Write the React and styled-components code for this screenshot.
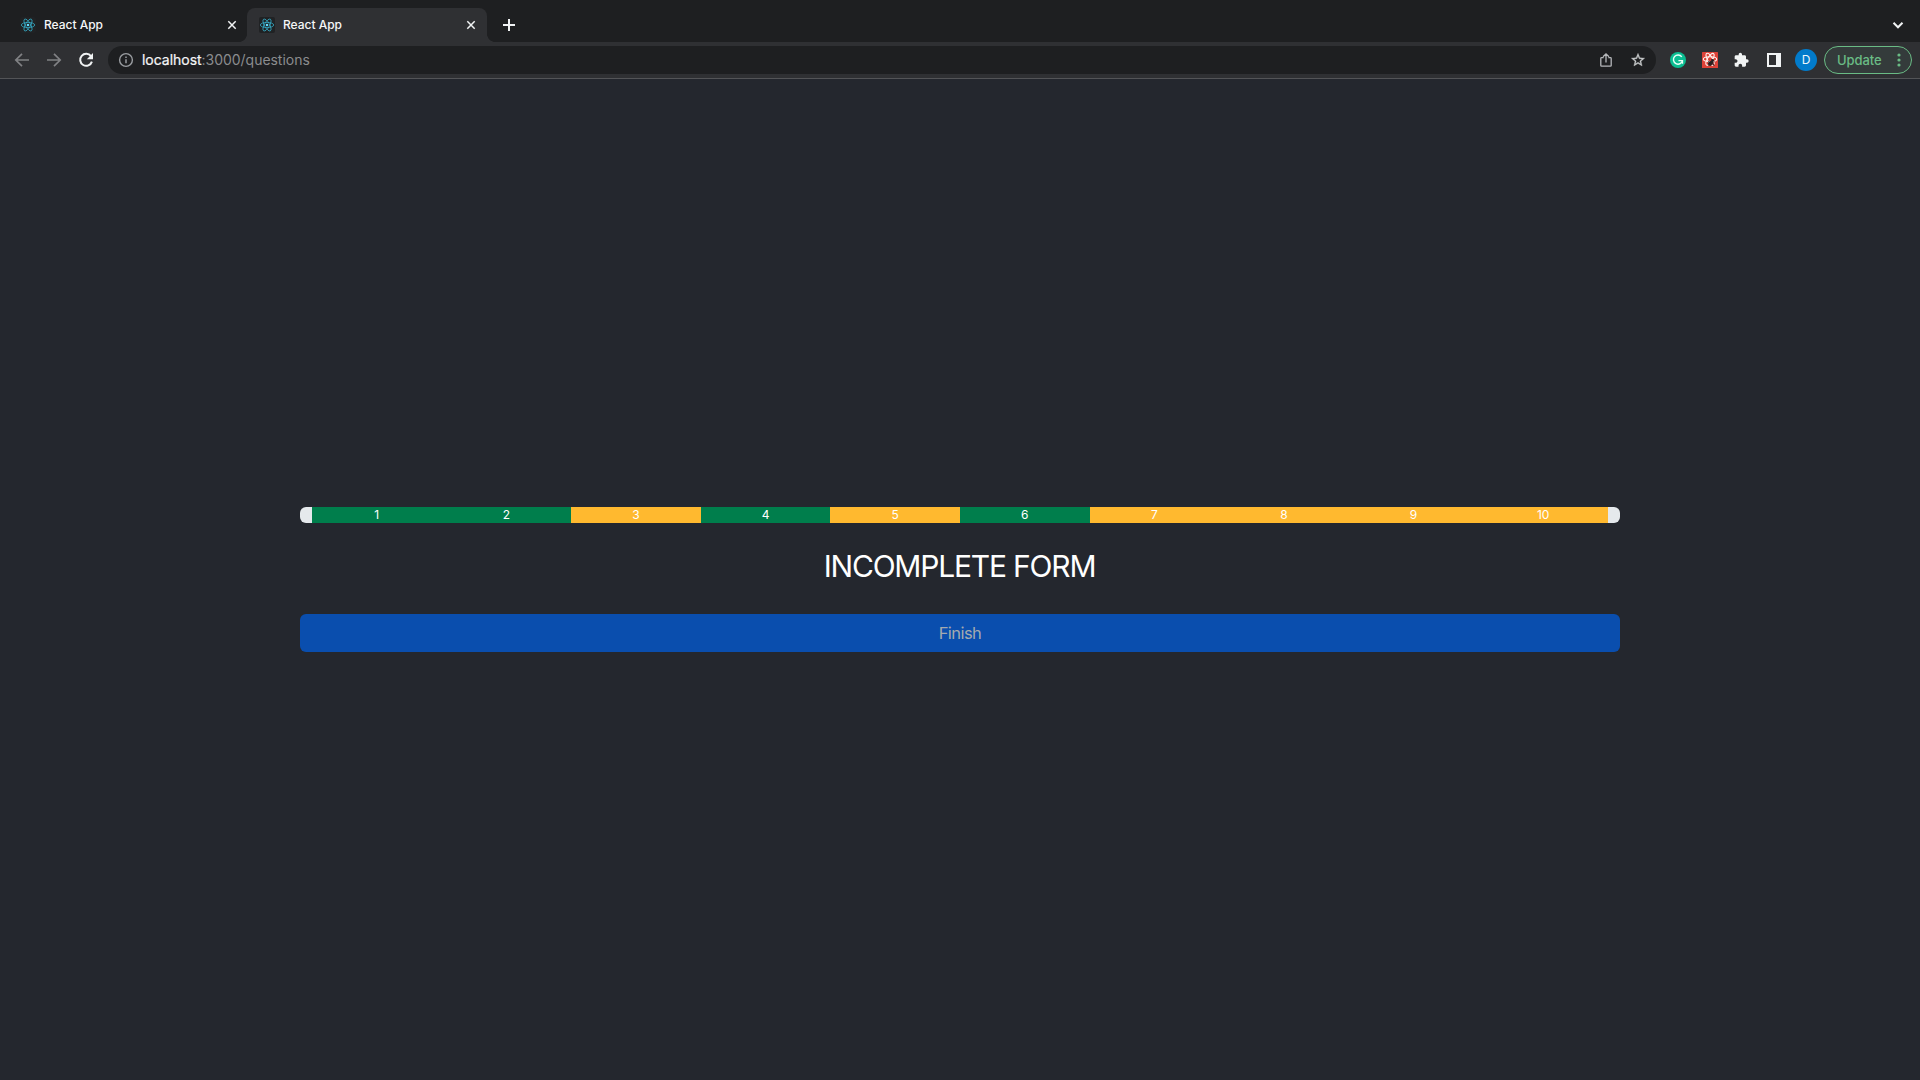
import React from "react";
import styled, { createGlobalStyle } from "styled-components";

const Global = createGlobalStyle`
  *, *::before, *::after { box-sizing: border-box; }
  html, body { margin: 0; padding: 0; background: #24272e; }
  body, button { font-family: Inter, "Liberation Sans", sans-serif; }
  body { overflow: hidden; }
  svg { display: block; flex: none; }
`;

const Browser = styled.div`
  width: 100%;
  height: 100vh;
  display: flex;
  flex-direction: column;
`;

const TabStrip = styled.div`
  flex: none;
  height: 42px;
  display: flex;
  align-items: flex-end;
  background: #1e1f21;
  padding: 0 14px 0 8px;
`;

const Tab = styled.div`
  position: relative;
  width: ${(p) => (p.$active ? 240 : 239)}px;
  height: 34px;
  display: flex;
  align-items: center;
  gap: 8px;
  padding: 0 ${(p) => (p.$active ? 9 : 8)}px 0 12px;
  border-radius: 8px 8px 0 0;
  background: ${(p) => (p.$active ? "#2f3033" : "transparent")};
  color: #f6f7f8;

  &::before,
  &::after {
    content: "";
    display: ${(p) => (p.$active ? "block" : "none")};
    position: absolute;
    bottom: 0;
    width: 8px;
    height: 8px;
  }
  &::before {
    left: -8px;
    background: radial-gradient(circle at 0 0, transparent 7.6px, #2f3033 8.2px);
  }
  &::after {
    right: -8px;
    background: radial-gradient(circle at 100% 0, transparent 7.6px, #2f3033 8.2px);
  }
`;

const Favicon = styled.span`
  width: 16px;
  height: 16px;
  border-radius: 2px;
  background: #202224;
`;

const TabTitle = styled.span`
  flex: 1;
  font-size: 12px;
  line-height: 16px;
  font-weight: 500;
  letter-spacing: -0.02px;
`;

const IconButton = styled.button`
  flex: none;
  width: ${(p) => p.$w || 14}px;
  height: ${(p) => p.$h || 14}px;
  display: flex;
  align-items: center;
  justify-content: center;
  padding: 0;
  border: 0;
  background: none;
  color: ${(p) => p.$color || "#f1f3f4"};
`;

const NewTab = styled(IconButton)`
  margin: 0 auto 10px 15px;
`;

const TabSearch = styled(IconButton)`
  margin-bottom: 10px;
`;

const Toolbar = styled.div`
  flex: none;
  height: 37px;
  display: flex;
  align-items: center;
  padding: 0 8px 0 6px;
  background: #2f3033;
  border-bottom: 1px solid #535457;
`;

const Address = styled.div`
  flex: 1;
  height: 28px;
  display: flex;
  align-items: center;
  margin-left: 6px;
  padding: 0 2px 0 10px;
  border-radius: 14px;
  background: #1e1f21;
`;

const Url = styled.span`
  flex: 1;
  margin-left: 8px;
  font-size: 14px;
  line-height: 20px;
  letter-spacing: -0.03px;
  color: #8b8c8e;
`;

const Host = styled.span`
  color: #f5f6f7;
  -webkit-text-stroke: 0.2px currentColor;
`;

const Extensions = styled.div`
  display: flex;
  align-items: center;
  margin-left: 6px;
`;

const Avatar = styled.span`
  width: 22px;
  height: 22px;
  margin: 0 7px 0 5px;
  display: flex;
  align-items: center;
  justify-content: center;
  border-radius: 50%;
  background: #027bcb;
  color: #eef6fb;
  font-size: 12px;
  font-weight: 400;
  line-height: 22px;
`;

const Update = styled.button`
  width: 88px;
  height: 28px;
  display: flex;
  align-items: center;
  justify-content: space-between;
  padding: 0 10px 0 12px;
  border: 1px solid #6abb85;
  border-radius: 14px;
  background: #343b3b;
  color: #6abb85;
  font-size: 13px;
  font-weight: 500;
  line-height: 18px;
  letter-spacing: -0.1px;
`;

const Page = styled.main`
  flex: 1;
  display: flex;
  flex-direction: column;
  align-items: center;
  justify-content: center;
  background: #24272e;
`;

const Form = styled.section`
  width: 1320px;
  display: flex;
  flex-direction: column;
`;

const Progress = styled.div`
  height: 16px;
  display: flex;
  padding: 0 12px;
  border-radius: 6px;
  background: #e5e9ec;
`;

const Segment = styled.div`
  flex: 1;
  background: ${(p) => (p.$answered ? "#007e4c" : "#ffb92f")};
  color: #fff;
  font-size: 12px;
  line-height: 16px;
  text-align: center;
`;

const Title = styled.h1`
  margin: 23px 0 28px;
  font-size: 30px;
  line-height: 40px;
  font-weight: 400;
  letter-spacing: -1.2px;
  text-indent: -1px;
  text-align: center;
  color: #fff;
`;

const Finish = styled.button`
  height: 38px;
  padding: 0;
  border: 0;
  border-radius: 6px;
  background: #0a4eae;
  color: #a4aaaf;
  font-size: 16.5px;
  line-height: 24px;
  letter-spacing: -0.55px;
`;

const ReactLogo = ({ size = 16 }) => (
  <svg width={size} height={size} viewBox="0 0 16 16" fill="none" stroke="#35a9c4" strokeWidth="0.8">
    <ellipse cx="8" cy="8" rx="6.7" ry="2.6" />
    <ellipse cx="8" cy="8" rx="6.7" ry="2.6" transform="rotate(60 8 8)" />
    <ellipse cx="8" cy="8" rx="6.7" ry="2.6" transform="rotate(120 8 8)" />
    <circle cx="8" cy="8" r="1.3" fill="#61dafb" stroke="none" />
  </svg>
);

const Cross = () => (
  <svg width="14" height="14" viewBox="0 0 14 14" stroke="currentColor" strokeWidth="1.5">
    <path d="M3.3 3.3l7.4 7.4M10.7 3.3l-7.4 7.4" />
  </svg>
);

const Arrow = ({ flip }) => (
  <svg width="16" height="16" viewBox="0 0 16 16" fill="none" stroke="currentColor" strokeWidth="1.7">
    <g transform={flip ? "matrix(-1 0 0 1 16 0)" : undefined}>
      <path d="M15 8H2.2M8 1.8L1.8 8 8 14.2" />
    </g>
  </svg>
);

const Reload = () => (
  <svg width="16" height="16" viewBox="0 0 16 16">
    <path d="M13 4.2A6 6 0 1 0 13.9 9.6" fill="none" stroke="currentColor" strokeWidth="2" />
    <path d="M15 1v6.2H8.8z" fill="currentColor" />
  </svg>
);

const Info = () => (
  <svg width="16" height="16" viewBox="0 0 16 16" fill="none" stroke="currentColor" strokeWidth="1.4">
    <circle cx="8" cy="8" r="6.4" />
    <path d="M8 7.2v4.1M8 4.4v1.5" strokeWidth="1.5" />
  </svg>
);

const Share = () => (
  <svg width="16" height="16" viewBox="0 0 16 16" fill="none" stroke="currentColor" strokeWidth="1.3">
    <path d="M5.7 5.7H3.6a.8.8 0 0 0-.8.8v6.9c0 .4.4.8.8.8h8.8c.4 0 .8-.4.8-.8V6.5a.8.8 0 0 0-.8-.8h-2.1M8 10.5V2M5 4.8L8 1.8l3 3" />
  </svg>
);

const Star = () => (
  <svg width="16" height="16" viewBox="0 0 24 24" fill="currentColor">
    <path d="M22 9.24l-7.19-.62L12 2 9.19 8.63 2 9.24l5.46 4.73L5.82 21 12 17.27 18.18 21l-1.63-7.03L22 9.24zM12 15.4l-3.76 2.27 1-4.28-3.32-2.88 4.38-.38L12 6.1l1.71 4.04 4.38.38-3.32 2.88 1 4.28L12 15.4z" stroke="currentColor" strokeWidth=".5" />
  </svg>
);

const Grammarly = () => (
  <svg width="16" height="16" viewBox="0 0 16 16" fill="none">
    <circle cx="8" cy="8" r="8" fill="#0bbd91" />
    <path d="M11.8 4.9A4.6 4.6 0 1 0 12.5 8.7" stroke="#e8fff8" strokeWidth="1.4" />
    <path d="M8.4 8.6h4.1v3.2" stroke="#e8fff8" strokeWidth="1.3" />
  </svg>
);

const DevTools = () => (
  <svg width="16" height="16" viewBox="0 0 16 16" fill="none">
    <rect width="16" height="16" rx=".6" fill="#dd4238" />
    <g stroke="#fff3ef" strokeWidth="1.1">
      <ellipse cx="8" cy="7.3" rx="6.7" ry="2.5" />
      <ellipse cx="8" cy="7.3" rx="6.7" ry="2.5" transform="rotate(60 8 7.3)" />
      <ellipse cx="8" cy="7.3" rx="6.7" ry="2.5" transform="rotate(120 8 7.3)" />
    </g>
    <ellipse cx="8.8" cy="11.2" rx="1.9" ry="2.9" fill="#2a2020" transform="rotate(35 8.8 11.2)" />
    <circle cx="10.7" cy="8.3" r="1.3" fill="#2a2020" />
    <path d="M6 9.5l6.5 3.5M6.4 13.8l.7-5M9.5 7l2.5 7M6 12l6.500-2.500" stroke="#2a2020" strokeWidth=".7" />
  </svg>
);

const Puzzle = () => (
  <svg width="16" height="16" viewBox="1 0 24 24" fill="currentColor">
    <path d="M20.5 11H19V7c0-1.1-.9-2-2-2h-4V3.5a2.5 2.5 0 0 0-5 0V5H4c-1.1 0-1.99.9-1.99 2v3.8H3.5c1.49 0 2.7 1.21 2.7 2.7s-1.21 2.7-2.7 2.7H2V20c0 1.1.9 2 2 2h3.8v-1.5c0-1.49 1.21-2.7 2.7-2.7s2.7 1.21 2.7 2.7V22H17c1.1 0 2-.9 2-2v-4h1.5a2.5 2.5 0 0 0 0-5z" />
  </svg>
);

const SidePanel = () => (
  <svg width="14" height="14" viewBox="0 0 14 14" fill="currentColor">
    <path fillRule="evenodd" d="M0 0h14v14H0zM2 2v10h7V2z" />
  </svg>
);

const questions = [true, true, false, true, false, true, false, false, false, false];

const BrowserTab = ({ active }) => (
  <Tab $active={active}>
    <Favicon>
      <ReactLogo />
    </Favicon>
    <TabTitle>React App</TabTitle>
    <IconButton aria-label="Close tab">
      <Cross />
    </IconButton>
  </Tab>
);

export default function App() {
  return (
    <Browser>
      <Global />
      <TabStrip>
        <BrowserTab />
        <BrowserTab active />
        <NewTab aria-label="New tab">
          <svg width="14" height="14" viewBox="0 0 14 14" stroke="currentColor" strokeWidth="2">
            <path d="M7 1v12M1 7h12" />
          </svg>
        </NewTab>
        <TabSearch aria-label="Search tabs" $w={16}>
          <svg width="12" height="12" viewBox="0 0 12 12" fill="none" stroke="currentColor" strokeWidth="2">
            <path d="M1.5 3.8L6 8.3l4.5-4.5" />
          </svg>
        </TabSearch>
      </TabStrip>
      <Toolbar>
        <IconButton aria-label="Back" $w={32} $h={28} $color="#808184">
          <Arrow />
        </IconButton>
        <IconButton aria-label="Forward" $w={32} $h={28} $color="#808184">
          <Arrow flip />
        </IconButton>
        <IconButton aria-label="Reload" $w={32} $h={28}>
          <Reload />
        </IconButton>
        <Address>
          <IconButton aria-label="Site information" $w={16} $color="#9a9da1">
            <Info />
          </IconButton>
          <Url>
            <Host>localhost</Host>:3000/questions
          </Url>
          <IconButton aria-label="Share" $w={32} $h={28} $color="#b5b7ba">
            <Share />
          </IconButton>
          <IconButton aria-label="Bookmark" $w={32} $h={28} $color="#c8cacc">
            <Star />
          </IconButton>
        </Address>
        <Extensions>
          <IconButton aria-label="Grammarly" $w={32} $h={28}>
            <Grammarly />
          </IconButton>
          <IconButton aria-label="Developer tools" $w={32} $h={28}>
            <DevTools />
          </IconButton>
          <IconButton aria-label="Extensions" $w={32} $h={28}>
            <Puzzle />
          </IconButton>
          <IconButton aria-label="Side panel" $w={32} $h={28}>
            <SidePanel />
          </IconButton>
          <Avatar>D</Avatar>
          <Update>
            Update
            <svg width="4" height="14" viewBox="0 0 4 14" fill="currentColor">
              <circle cx="2" cy="2" r="1.6" />
              <circle cx="2" cy="7" r="1.6" />
              <circle cx="2" cy="12" r="1.6" />
            </svg>
          </Update>
        </Extensions>
      </Toolbar>
      <Page>
        <Form>
          <Progress>
            {questions.map((answered, i) => (
              <Segment key={i} $answered={answered}>
                {i + 1}
              </Segment>
            ))}
          </Progress>
          <Title>INCOMPLETE FORM</Title>
          <Finish disabled>Finish</Finish>
        </Form>
      </Page>
    </Browser>
  );
}
